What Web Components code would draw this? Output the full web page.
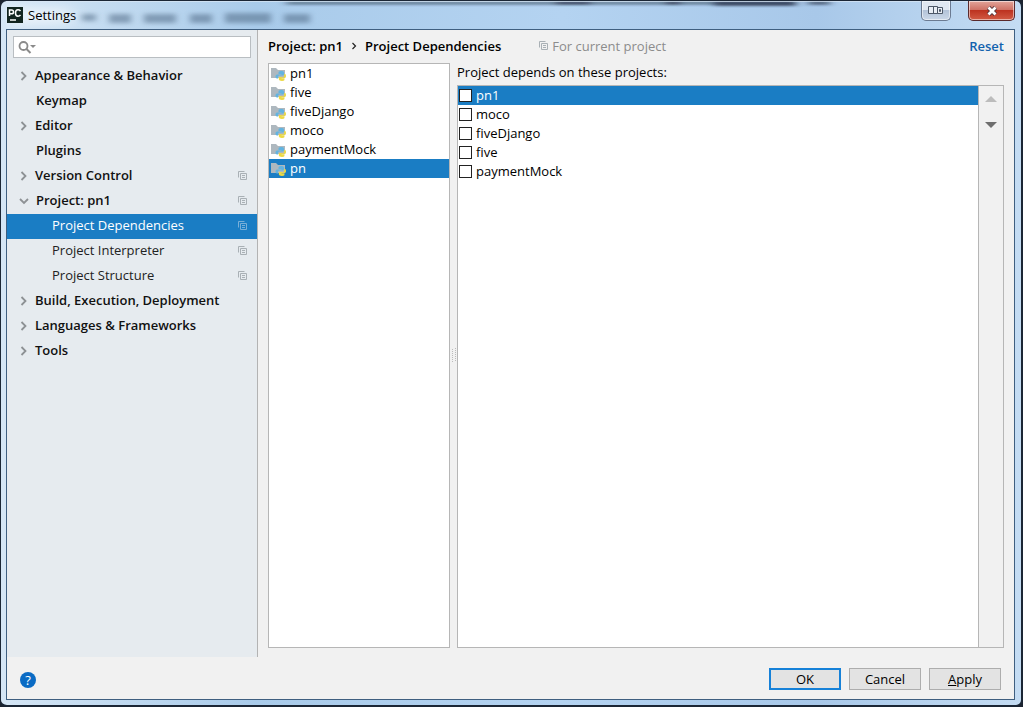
<!DOCTYPE html>
<html lang="en">
<head>
<meta charset="utf-8">
<title>Settings</title>
<style>
body { margin: 0; font: 13px/18px "Open Sans", "Noto Sans CJK SC", sans-serif; color: #000; background: #1c2430; }
</style>
</head>
<body>
<settings-window caption="Settings">
  <settings-sidebar slot="sidebar">
    <tree-row kind="closed">Appearance &amp; Behavior</tree-row>
    <tree-row kind="leaf">Keymap</tree-row>
    <tree-row kind="closed">Editor</tree-row>
    <tree-row kind="leaf">Plugins</tree-row>
    <tree-row kind="closed" scoped>Version Control</tree-row>
    <tree-row kind="open" scoped>Project: pn1</tree-row>
    <tree-row kind="child" scoped selected>Project Dependencies</tree-row>
    <tree-row kind="child" scoped>Project Interpreter</tree-row>
    <tree-row kind="child" scoped>Project Structure</tree-row>
    <tree-row kind="closed">Build, Execution, Deployment</tree-row>
    <tree-row kind="closed">Languages &amp; Frameworks</tree-row>
    <tree-row kind="closed">Tools</tree-row>
  </settings-sidebar>
  <dependencies-page slot="page">
    <project-item slot="projects">pn1</project-item>
    <project-item slot="projects">five</project-item>
    <project-item slot="projects">fiveDjango</project-item>
    <project-item slot="projects">moco</project-item>
    <project-item slot="projects">paymentMock</project-item>
    <project-item slot="projects" selected>pn</project-item>
    <check-item slot="depends" selected>pn1</check-item>
    <check-item slot="depends">moco</check-item>
    <check-item slot="depends">fiveDjango</check-item>
    <check-item slot="depends">five</check-item>
    <check-item slot="depends">paymentMock</check-item>
  </dependencies-page>
  <dialog-footer slot="footer"></dialog-footer>
</settings-window>

<script>
const define = (name, html, setup) => customElements.define(name, class extends HTMLElement {
  connectedCallback() {
    if (this.shadowRoot) return;
    this.attachShadow({ mode: 'open' }).innerHTML = html;
    if (setup) setup(this, this.shadowRoot);
  }
});

define('copy-icon', `
<style>:host { display: block; width: 9px; height: 9px; color: #a9b0b5; } svg { display: block; }</style>
<svg width="9" height="9" viewBox="0 0 9 9" fill="none" stroke="currentColor" aria-hidden="true">
  <path d="M6.500 .5h-6v6"/><path d="M2.500 2.500h6v6h-6z"/><path d="M4 4.500h3M4 6.500h3"/>
</svg>`);

define('tree-row', `
<style>
:host { display: flex; align-items: center; box-sizing: border-box; height: 25px; padding: 0 10px 2px 12px; font-weight: 600; color: #111; }
:host([kind="child"]) { font-weight: normal; color: #222; }
:host([selected]) { background: #1a7dc4; color: #fff; }
.arrow { flex: none; width: 16px; height: 10px; color: #8d9194; }
:host([kind="child"]) .arrow { width: 33px; }
:host([kind="leaf"]) .arrow, :host([kind="open"]) .arrow { width: 17px; }
svg { display: none; }
:host([kind="closed"]) .closed, :host([kind="open"]) .open { display: block; }
.text { flex: 1; white-space: nowrap; padding-bottom: 2px; }
copy-icon { display: none; }
:host([scoped]) copy-icon { display: block; }
:host([selected]) copy-icon { color: #79afd8; }
</style>
<span class="arrow">
  <svg class="closed" width="10" height="10" viewBox="0 0 10 10" fill="none" stroke="currentColor" stroke-width="1.800" aria-hidden="true"><path d="M2.500 1l4 4-4 4"/></svg>
  <svg class="open" width="10" height="10" viewBox="0 0 10 10" fill="none" stroke="currentColor" stroke-width="1.800" aria-hidden="true"><path d="M1 3l4 4 4-4"/></svg>
</span>
<span class="text"><slot></slot></span><copy-icon></copy-icon>`,
(host) => {
  host.setAttribute('role', 'treeitem');
  host.setAttribute('aria-selected', host.hasAttribute('selected'));
});

define('settings-sidebar', `
<style>
:host { display: block; background: #e6ebef; border-right: 1px solid #b3b3b3; }
label { display: flex; align-items: center; height: 20px; margin: 6px; padding-left: 4px; background: #fff; border: 1px solid #b9bec2; }
svg { flex: none; }
input { flex: 1; min-width: 0; border: 0; padding: 0 4px; background: none; font: inherit; outline: 0; }
</style>
<label>
  <svg width="18" height="16" viewBox="0 0 18 16" aria-hidden="true"><circle cx="5.500" cy="7" r="4" fill="none" stroke="#8a8a8a" stroke-width="1.800"/><path d="M8.500 10l4 4" stroke="#8a8a8a" stroke-width="2"/><path d="M12 6h6l-3 3z" fill="#8a8a8a"/></svg>
  <input type="text" aria-label="Search settings">
</label>
<div role="tree" aria-label="Settings categories"><slot></slot></div>`);

define('project-item', `
<style>
:host { display: flex; align-items: center; gap: 4px; height: 19px; padding-left: 2px; }
:host([selected]) { background: #1a7dc4; color: #fff; }
svg { flex: none; }
span { padding-bottom: 2px; }
</style>
<svg width="15" height="15" viewBox="0 0 15 15" aria-hidden="true">
  <path d="M0 2h5l2 2h7v8H0z" fill="#aeb8bf"/>
  <path d="M10 5c-2.500 0-2.500 1-2.500 2v1h3v.5H6c-1 0-1.500 1-1.500 2s.5 2 1.500 2h1v-1.500c0-1 .8-1.500 1.500-1.500h3c.8 0 1.500-.5 1.500-1.300V7c0-1.500-1-2-3-2z" fill="#62b4e0"/>
  <path d="M11 15c2.500 0 2.500-1 2.500-2v-.8h-3v-.4h3.500c.7 0 1-.8 1-1.800 0-1.200-.4-2-1-2h-.8v1.500c0 1-.7 1.500-1.500 1.500H9c-.7 0-1.200.5-1.200 1.200V13c0 1.300 1.200 2 3.200 2z" fill="#ecd945"/>
</svg>
<span><slot></slot></span>`,
(host) => {
  host.setAttribute('role', 'option');
  host.setAttribute('aria-selected', host.hasAttribute('selected'));
});

define('check-item', `
<style>
:host { display: block; }
:host([selected]) { background: #1a7dc4; color: #fff; }
label { display: flex; align-items: center; gap: 4px; height: 19px; padding-left: 1px; }
input { appearance: none; flex: none; box-sizing: border-box; width: 13px; height: 13px; margin: 0; background: #fff; border: 1px solid #222; }
input:checked { background: #1a7dc4; box-shadow: inset 0 0 0 2px #fff; }
span { padding-bottom: 2px; }
</style>
<label><input type="checkbox"><span><slot></slot></span></label>`);

define('dependencies-page', `
<style>
:host { display: flex; flex-direction: column; min-width: 0; padding: 0 10px 9px; }
header { display: flex; align-items: center; box-sizing: border-box; height: 33px; padding-bottom: 2px; white-space: nowrap; }
h2 { display: flex; align-items: center; margin: 0; font: inherit; font-weight: 600; }
h2 svg { margin: 0 7px; }
.scope { display: flex; align-items: center; gap: 4px; flex: 1; margin-left: 38px; color: #8c8c8c; }
a { color: #1262ae; font-weight: 600; text-decoration: none; }
.panes { flex: 1; display: grid; grid-template-columns: 182px 7px 1fr; }
.box { border: 1px solid #b6b6b6; background: #fff; }
.grip { align-self: center; justify-self: center; }
.right { display: flex; flex-direction: column; min-width: 0; }
.caption { height: 22px; line-height: 18px; }
.list { flex: 1; display: flex; }
.items { flex: 1; }
.order { display: flex; flex-direction: column; width: 24px; background: #f1f1f1; border-left: 1px solid #b6b6b6; }
button { height: 26px; border: 0; padding: 0; background: none; display: grid; place-items: center; }
</style>
<header>
  <h2>Project: pn1 <svg width="8" height="10" viewBox="0 0 8 10" fill="none" stroke="#222" stroke-width="1.200" aria-hidden="true"><path d="M2.500 2l3 3-3 3"/></svg> Project Dependencies</h2>
  <span class="scope"><copy-icon></copy-icon>For current project</span>
  <a href="#reset">Reset</a>
</header>
<div class="panes">
  <div class="box" role="listbox" aria-label="Projects"><slot name="projects"></slot></div>
  <svg class="grip" width="5" height="16" viewBox="0 0 5 16" stroke="#bbb" aria-hidden="true"><path d="M1.500 1v14M4.500 0v14" stroke-dasharray="1 1"/></svg>
  <div class="right">
    <div class="caption">Project depends on these projects:</div>
    <div class="box list">
      <div class="items"><slot name="depends"></slot></div>
      <div class="order">
        <button aria-label="Move up" disabled><svg width="12" height="6" viewBox="0 0 12 6"><path d="M0 6l6-6 6 6z" fill="#bcbcbc"/></svg></button>
        <button aria-label="Move down"><svg width="12" height="6" viewBox="0 0 12 6"><path d="M0 0h12l-6 6z" fill="#6e6e6e"/></svg></button>
      </div>
    </div>
  </div>
</div>`);

define('dialog-footer', `
<style>
:host { display: flex; align-items: center; gap: 8px; height: 42px; padding: 0 13px; }
.help { width: 16px; height: 16px; padding: 0; border: 0; border-radius: 8px; background: #0a6bc4; color: #fff; font: inherit; line-height: 16px; margin: 4px auto 0 0; }
.action { box-sizing: border-box; width: 72px; height: 22px; margin-top: 2px; padding: 0; border: 1px solid #adadad; background: #e3e3e3; font: inherit; line-height: 18px; color: #000; }
.default { border: 2px solid #1681d8; line-height: 16px; }
</style>
<button class="help" aria-label="Help">?</button>
<button class="action default">OK</button>
<button class="action">Cancel</button>
<button class="action"><u>A</u>pply</button>`);

define('title-bar', `
<style>
:host { display: flex; align-items: flex-start; position: relative; height: 28px; padding: 0 0 0 1px; }
.logo { width: 16px; height: 16px; margin-top: 6px; }
h1 { margin: 5px 0 0 5px; font: inherit; flex: 1; }
.glass { position: absolute; inset: 0; overflow: hidden; }
.glass svg { position: absolute; left: 0; top: 0; width: 100%; height: 100%; }
.logo, h1, button { position: relative; }
button { height: 20px; padding: 0; border: 1px solid #6b7a91; border-top: 0; border-radius: 0 0 5px 5px; display: grid; place-items: center; box-shadow: inset 0 0 0 1px #ffffff88; }
.dock { width: 30px; margin-right: 17px; background: linear-gradient(#dfe7f1 45%, #b3c3d8 50%, #cbd8e8); }
.close { width: 47px; border-color: #5a2a2c; background: linear-gradient(#e2a59a, #cf7366 45%, #bd3320 50%, #d25b44); }
</style>
<div class="glass" aria-hidden="true">
  <svg>
    <defs>
      <filter id="soft" x="-30%" y="-80%" width="160%" height="260%"><feGaussianBlur stdDeviation="3 2"/></filter>
      <filter id="top" x="-10%" y="-80%" width="120%" height="260%"><feGaussianBlur stdDeviation="4 1"/></filter>
      <filter id="haze" x="-30%" y="-80%" width="160%" height="260%"><feGaussianBlur stdDeviation="9 5"/></filter>
    </defs>
    <rect x="0" y="6" width="66" height="18" fill="#fff" opacity=".5" filter="url(#haze)"/>
    <g fill="#49647f" opacity=".5" filter="url(#soft)">
      <rect x="76" y="13" width="14" height="7"/><rect x="103" y="13" width="22" height="9"/><rect x="138" y="13" width="32" height="9"/><rect x="184" y="13" width="22" height="9"/><rect x="219" y="12" width="46" height="10"/><rect x="278" y="13" width="26" height="9"/>
    </g>
    <g fill="#26344c" filter="url(#top)">
      <rect x="280" y="0" width="510" height="4" opacity=".45"/><rect x="550" y="0" width="34" height="4" opacity=".6"/><rect x="660" y="0" width="14" height="4" opacity=".6"/><rect x="708" y="0" width="82" height="5" opacity=".7"/><rect x="802" y="0" width="22" height="4" opacity=".6"/>
    </g>
    <path d="M0 .5h2000" stroke="#dbe8f5" opacity=".7"/>
  </svg>
</div>
<svg class="logo" viewBox="0 0 16 16" aria-hidden="true"><rect width="16" height="16" fill="#12251f"/><path d="M2.500 9V3h2q2 0 2 1.900t-2 1.900h-2M13.500 4q-1-1.200-2.500-1.200-2.500 0-2.500 3.200t2.500 3.200q1.500 0 2.500-1.200" fill="none" stroke="#fff" stroke-width="1.500"/><path d="M3 13h6" stroke="#fff" stroke-width="1.500"/></svg>
<h1><slot></slot></h1>
<button class="dock" aria-label="Dock window"><svg width="16" height="9" viewBox="0 0 16 9" fill="#e9eef5" stroke="#4d5868" aria-hidden="true"><path d="M.5.500h9v7h-9zM5.500 1v6M9.500 1.500h5v6h-5zM11.500 3.500h1v2h-1z"/></svg></button>
<button class="close" aria-label="Close"><svg width="14" height="10" viewBox="0 0 14 10" aria-hidden="true"><path d="M3.500 1.500l7 7M10.500 1.500l-7 7" stroke="#50343a" stroke-width="4.500"/><path d="M3.500 1.500l7 7M10.500 1.500l-7 7" stroke="#fff" stroke-width="2.800"/></svg></button>`);

define('settings-window', `
<style>
:host { display: flex; flex-direction: column; box-sizing: border-box; min-height: 100vh; padding: 0 6px 5px 5px; border: 1px solid #1b2635; border-right-width: 2px; border-bottom-width: 2px; border-radius: 7px;
  background: linear-gradient(90deg, #d5e6f5 0, #a9cbea 25%, #b4d3f1 55%, #a8c8e9 80%, #c4dcf3 100%); }
.client { flex: 1; display: grid; grid-template: 1fr auto / 251px 1fr; border: 1px solid #3f5f80; background: #f1f1f1; }
::slotted([slot="footer"]) { grid-column: 1 / -1; }
</style>
<title-bar></title-bar>
<div class="client"><slot name="sidebar"></slot><slot name="page"></slot><slot name="footer"></slot></div>`,
(host, root) => { root.querySelector('title-bar').textContent = host.getAttribute('caption'); });
</script>
</body>
</html>
